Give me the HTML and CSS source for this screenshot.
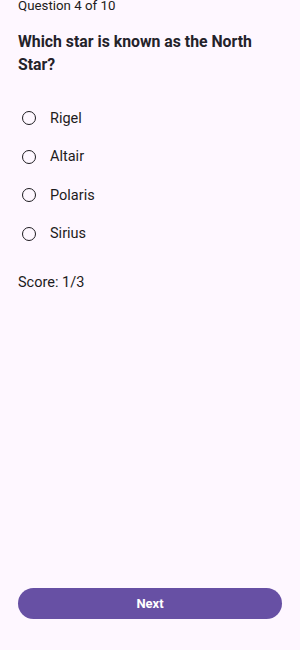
FILE: index.html
```html
<!DOCTYPE html>
<html>
<head>
<meta charset="utf-8">
<link rel="stylesheet" href="styles.css">
</head>
<body>
<div class="screen">
  <div class="progress">Question 4 of 10</div>
  <h1 class="question">Which star is known as the North Star?</h1>
  <div class="options">
    <div class="option"><span class="radio"></span><span class="label">Rigel</span></div>
    <div class="option"><span class="radio"></span><span class="label">Altair</span></div>
    <div class="option"><span class="radio"></span><span class="label">Polaris</span></div>
    <div class="option"><span class="radio"></span><span class="label">Sirius</span></div>
  </div>
  <div class="score">Score: 1/3</div>
  <div class="spacer"></div>
  <button class="next">Next</button>
</div>
</body>
</html>
```
FILE: styles.css
```css
html, body {
  margin: 0;
  padding: 0;
  background: #FEF7FF;
}
body {
  font-family: Roboto, "Noto Sans", sans-serif;
  color: #1D1B20;
}
.screen {
  height: 650px;
  box-sizing: border-box;
  padding: 0 18px 31px;
  display: flex;
  flex-direction: column;
}
.progress {
  font-size: 13.3px;
  line-height: 14px;
  margin-top: -1px;
}
.question {
  margin: 17px 0 0;
  font-size: 15.8px;
  line-height: 23px;
  font-weight: 700;
  color: #24222a;
}
.options {
  margin-top: 23px;
  display: flex;
  flex-direction: column;
}
.option {
  height: 38.5px;
  display: flex;
  align-items: center;
  padding-left: 4px;
}
.radio {
  width: 14px;
  height: 14px;
  box-sizing: border-box;
  border: 1.6px solid #1D1B20;
  border-radius: 50%;
  margin-right: 14px;
}
.label {
  font-size: 14.5px;
}
.score {
  margin-top: 20px;
  font-size: 14.5px;
  line-height: 20px;
}
.spacer {
  flex: 1;
}
.next {
  height: 31px;
  border: none;
  border-radius: 16px;
  background: #6750A4;
  color: #FFFFFF;
  font-family: Roboto, "Noto Sans", sans-serif;
  font-weight: 700;
  font-size: 13px;
}
```
